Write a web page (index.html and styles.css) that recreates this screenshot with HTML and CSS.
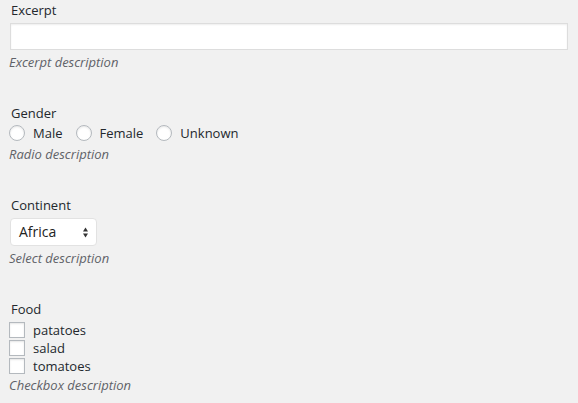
FILE: index.html
```html
<!DOCTYPE html>
<html>
<head>
<meta charset="utf-8">
<link rel="stylesheet" href="styles.css">
</head>
<body>
<div class="form">
  <div class="field field-excerpt">
    <label class="label">Excerpt</label>
    <input class="text-input" type="text">
    <p class="desc">Excerpt description</p>
  </div>
  <div class="field field-gender">
    <label class="label">Gender</label>
    <div class="radios">
      <label class="radio"><span class="circle"></span>Male</label>
      <label class="radio"><span class="circle"></span>Female</label>
      <label class="radio"><span class="circle"></span>Unknown</label>
    </div>
    <p class="desc">Radio description</p>
  </div>
  <div class="field field-continent">
    <label class="label">Continent</label>
    <div class="select">
      <span class="select-value">Africa</span>
      <svg class="select-arrows" width="5" height="11" viewBox="0 0 5 11"><path d="M2.5 0.5 L5 4.5 L0 4.5 Z M2.5 10.5 L5 6.5 L0 6.5 Z" fill="#333"/></svg>
    </div>
    <p class="desc">Select description</p>
  </div>
  <div class="field field-food">
    <label class="label">Food</label>
    <div class="checks">
      <label class="check"><span class="box"></span>patatoes</label>
      <label class="check"><span class="box"></span>salad</label>
      <label class="check"><span class="box"></span>tomatoes</label>
    </div>
    <p class="desc">Checkbox description</p>
  </div>
</div>
</body>
</html>
```
FILE: styles.css
```css
html, body {
  margin: 0;
  padding: 0;
  background: #f1f1f1;
}
body {
  font-family: "Open Sans", "Noto Sans", sans-serif;
  font-size: 13px;
  line-height: 18px;
  color: #23282d;
}
.form {
  padding: 1px 11px 0 9px;
  display: flex;
  flex-direction: column;
}
.field {
  display: flex;
  flex-direction: column;
}
.field-gender { margin-top: 33px; }
.field-continent { margin-top: 33px; }
.field-food { margin-top: 33px; }
.label {
  display: block;
  padding-left: 2px;
  color: #23282d;
}
.text-input {
  margin: 4px 0 0 1px;
  box-sizing: border-box;
  height: 27px;
  width: 558px;
  background: #fff;
  border: 1px solid #ddd;
  box-shadow: inset 0 1px 2px rgba(0,0,0,0.07);
  padding: 0;
  outline: none;
}
.desc {
  margin: 3px 0 0 0;
  font-style: italic;
  color: #5f6268;
}
.radios {
  display: flex;
  align-items: center;
  margin-top: 1px;
  height: 20px;
}
.radio {
  display: flex;
  align-items: center;
  margin-right: 13px;
}
.circle {
  box-sizing: border-box;
  width: 16px;
  height: 16px;
  border: 1px solid #b4b9be;
  border-radius: 50%;
  background: #fff;
  box-shadow: inset 0 1px 2px rgba(0,0,0,0.1);
  margin-right: 8px;
}
.field-gender .desc { margin-top: 2px; }
.select {
  margin: 4px 0 0 1px;
  box-sizing: border-box;
  width: 87px;
  height: 28px;
  background: #fff;
  border: 1px solid #e2e2e2;
  border-radius: 4px;
  display: flex;
  align-items: center;
  justify-content: space-between;
  padding: 0 8px 0 8px;
  font-size: 14px;
  color: #222;
}
.field-continent .desc { margin-top: 3px; }
.checks {
  display: flex;
  flex-direction: column;
  margin-top: 3px;
}
.check {
  display: flex;
  align-items: center;
  height: 18px;
}
.box {
  box-sizing: border-box;
  width: 16px;
  height: 16px;
  border: 1px solid #b4b9be;
  background: #fff;
  box-shadow: inset 0 1px 2px rgba(0,0,0,0.1);
  margin-right: 8px;
}
.field-food .desc { margin-top: 1px; }
```
